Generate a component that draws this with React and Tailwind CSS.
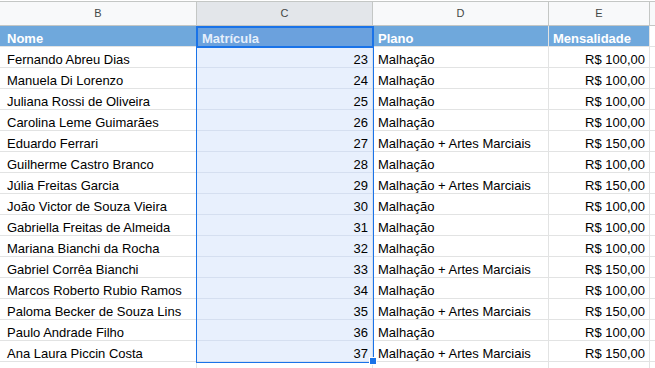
import React from "react";

const rows = [
  ["Fernando Abreu Dias", 23, "Malhação", "R$ 100,00"],
  ["Manuela Di Lorenzo", 24, "Malhação", "R$ 100,00"],
  ["Juliana Rossi de Oliveira", 25, "Malhação", "R$ 100,00"],
  ["Carolina Leme Guimarães", 26, "Malhação", "R$ 100,00"],
  ["Eduardo Ferrari", 27, "Malhação + Artes Marciais", "R$ 150,00"],
  ["Guilherme Castro Branco", 28, "Malhação", "R$ 100,00"],
  ["Júlia Freitas Garcia", 29, "Malhação + Artes Marciais", "R$ 150,00"],
  ["João Victor de Souza Vieira", 30, "Malhação", "R$ 100,00"],
  ["Gabriella Freitas de Almeida", 31, "Malhação", "R$ 100,00"],
  ["Mariana Bianchi da Rocha", 32, "Malhação", "R$ 100,00"],
  ["Gabriel Corrêa Bianchi", 33, "Malhação + Artes Marciais", "R$ 150,00"],
  ["Marcos Roberto Rubio Ramos", 34, "Malhação", "R$ 100,00"],
  ["Paloma Becker de Souza Lins", 35, "Malhação + Artes Marciais", "R$ 150,00"],
  ["Paulo Andrade Filho", 36, "Malhação", "R$ 100,00"],
  ["Ana Laura Piccin Costa", 37, "Malhação + Artes Marciais", "R$ 150,00"],
];

const cols = "grid grid-cols-[197px_176px_176px_101px_1fr]";

export default function App() {
  return (
    <div
      className="relative w-[655px] h-[368px] overflow-hidden bg-white text-[13px] leading-[15px] text-black"
      style={{ fontFamily: '"Liberation Sans", Arial, sans-serif' }}
    >
      <div className="h-px bg-white" />
      {/* column letters */}
      <div className={`${cols} h-[25px] border-t border-b border-[#c4c7c5] bg-[#f8f9fa] text-[11px] text-[#444746]`}>
        <div className="flex items-center justify-center border-r border-[#c4c7c5]">B</div>
        <div className="flex items-center justify-center border-r border-[#c4c7c5] bg-[#e3e6ea]">C</div>
        <div className="flex items-center justify-center border-r border-[#c4c7c5]">D</div>
        <div className="flex items-center justify-center border-r border-[#c4c7c5]">E</div>
        <div />
      </div>
      {/* header row */}
      <div className={`${cols} h-[21px] font-bold text-white`}>
        <div className="flex items-end pl-[7px] bg-[#6fa8dc] border-r border-b border-[#e2e3e3]">Nome</div>
        <div className="flex items-end pl-[5px] bg-[#6ba1dd] text-[#e6effb] border-r border-b border-[#e2e3e3]">Matrícula</div>
        <div className="flex items-end pl-[5px] bg-[#6fa8dc] border-r border-b border-[#e2e3e3]">Plano</div>
        <div className="flex items-end pl-[4px] bg-[#6fa8dc] border-r border-b border-[#e2e3e3]">Mensalidade</div>
        <div className="border-b border-[#e2e3e3]" />
      </div>
      {rows.map((r, i) => (
        <div key={i} className={`${cols} h-[21px]`}>
          <div className="flex items-end pl-[7px] whitespace-nowrap border-r border-b border-[#e2e3e3]">{r[0]}</div>
          <div className="flex items-end justify-end pr-[4px] bg-[#e8f0fd] border-r border-b border-[#d5dff0]">{r[1]}</div>
          <div className="flex items-end pl-[5px] whitespace-nowrap border-r border-b border-[#e2e3e3]">{r[2]}</div>
          <div className="flex items-end justify-end pr-[4px] whitespace-nowrap border-r border-b border-[#e2e3e3]">{r[3]}</div>
          <div className="border-b border-[#e2e3e3]" />
        </div>
      ))}
      <div className={`${cols} h-[6px]`}>
        <div className="border-r border-[#e2e3e3]" />
        <div className="border-r border-[#e2e3e3]" />
        <div className="border-r border-[#e2e3e3]" />
        <div className="border-r border-[#e2e3e3]" />
        <div />
      </div>
      {/* selection overlay */}
      <div className="pointer-events-none absolute left-[196px] top-[26px] w-[178px] h-[337px] border border-[#1a73e8]" />
      <div className="pointer-events-none absolute left-[196px] top-[26px] w-[178px] h-[22px] border-2 border-[#1a73e8]" />
      <div className="pointer-events-none absolute left-[370px] top-[358px] w-[6px] h-[6px] bg-[#1a73e8] outline outline-1 outline-white" />
    </div>
  );
}
